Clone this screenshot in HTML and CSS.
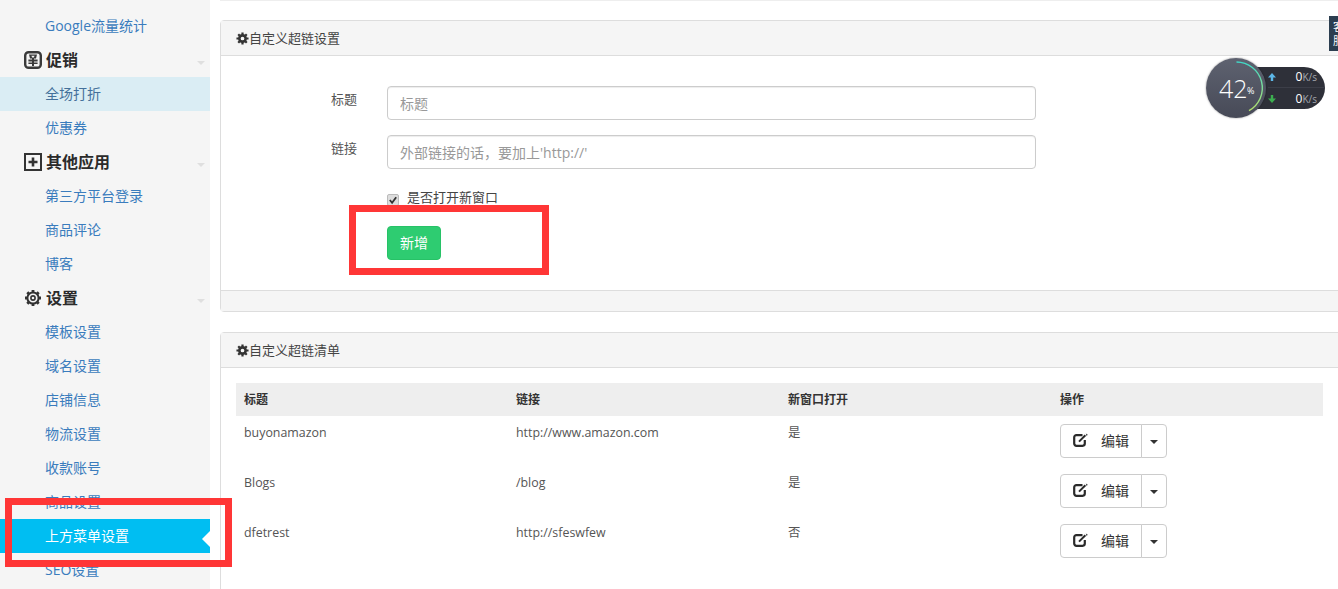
FILE: index.html
```html
<!DOCTYPE html>
<html lang="zh-CN">
<head>
<meta charset="utf-8">
<title>自定义超链设置</title>
<link rel="stylesheet" href="styles.css">
</head>
<body>
<div class="page">
  <aside class="sidebar">
    <a class="item">Google流量统计</a>
    <div class="heading">
      <svg class="head-icon" viewBox="0 0 18 18"><rect x="1.2" y="1.2" width="15.6" height="15.6" rx="3.4" fill="none" stroke="#3a3a3a" stroke-width="2.4"/><path d="M5 3.6H13L12 7.6H6ZM4.4 8.6H13.6V10.4H4.4ZM4.4 11.6H13.6V13H4.4ZM8 7H10V15H8Z" fill="#3a3a3a"/><path d="M7.4 4.8H10.6L9.8 6.6H8.2Z" fill="#f5f5f5"/></svg>
      <span>促销</span><i class="fold"></i>
    </div>
    <a class="item current">全场打折</a>
    <a class="item">优惠券</a>
    <div class="heading">
      <svg class="head-icon" viewBox="0 0 18 18"><rect x="1" y="1" width="16" height="16" fill="none" stroke="#333" stroke-width="2"/><path d="M9 4.5V13.5M4.5 9H13.5" fill="none" stroke="#333" stroke-width="2.6"/></svg>
      <span>其他应用</span><i class="fold"></i>
    </div>
    <a class="item">第三方平台登录</a>
    <a class="item">商品评论</a>
    <a class="item">博客</a>
    <div class="heading">
      <svg class="head-icon" viewBox="0 0 18 18"><circle cx="9" cy="9" r="5.6" fill="none" stroke="#333" stroke-width="2"/><circle cx="9" cy="9" r="2.1" fill="none" stroke="#333" stroke-width="1.6"/><path d="M9 1V3.6M9 14.4V17M1 9H3.6M14.4 9H17M3.3 3.3L5.2 5.2M12.8 12.8L14.7 14.7M3.3 14.7L5.2 12.8M12.8 5.2L14.7 3.3" stroke="#333" stroke-width="2.8"/></svg>
      <span>设置</span><i class="fold"></i>
    </div>
    <a class="item">模板设置</a>
    <a class="item">域名设置</a>
    <a class="item">店铺信息</a>
    <a class="item">物流设置</a>
    <a class="item">收款账号</a>
    <a class="item">商品设置</a>
    <a class="item active">上方菜单设置</a>
    <a class="item">SEO设置</a>
  </aside>

  <main class="main">
    <div class="top-edge"></div>

    <section class="panel">
      <header class="panel-head">
        <svg class="cog" viewBox="0 0 14 14"><path d="M7 2.2A4.8 4.8 0 1 0 7 11.8A4.8 4.8 0 1 0 7 2.2ZM7 5A2 2 0 1 1 7 9A2 2 0 1 1 7 5Z" fill="#333" fill-rule="evenodd"/><path d="M7 .5V3M7 11V13.5M.5 7H3M11 7H13.5M2.4 2.4L4 4M10 10L11.6 11.6M2.4 11.6L4 10M10 4L11.6 2.4" stroke="#333" stroke-width="2.4"/></svg>自定义超链设置
      </header>
      <div class="panel-body form-body">
        <div class="field">
          <label class="field-label">标题</label>
          <input class="field-input" type="text" placeholder="标题">
        </div>
        <div class="field">
          <label class="field-label">链接</label>
          <input class="field-input" type="text" placeholder="外部链接的话，要加上'http://'">
        </div>
        <div class="check-row">
          <span class="check"><svg viewBox="0 0 11 11"><path d="M2 5.5L4.5 8.5L9 2.5" fill="none" stroke="#333" stroke-width="2"/></svg></span>
          <span>是否打开新窗口</span>
        </div>
        <div class="submit-row"><button class="btn-add" type="button">新增</button></div>
      </div>
      <footer class="panel-foot"></footer>
    </section>

    <section class="panel">
      <header class="panel-head">
        <svg class="cog" viewBox="0 0 14 14"><path d="M7 2.2A4.8 4.8 0 1 0 7 11.8A4.8 4.8 0 1 0 7 2.2ZM7 5A2 2 0 1 1 7 9A2 2 0 1 1 7 5Z" fill="#333" fill-rule="evenodd"/><path d="M7 .5V3M7 11V13.5M.5 7H3M11 7H13.5M2.4 2.4L4 4M10 10L11.6 11.6M2.4 11.6L4 10M10 4L11.6 2.4" stroke="#333" stroke-width="2.4"/></svg>自定义超链清单
      </header>
      <div class="panel-body table-body">
        <table class="links">
          <thead>
            <tr><th>标题</th><th>链接</th><th>新窗口打开</th><th>操作</th></tr>
          </thead>
          <tbody>
            <tr>
              <td><span class="cell">buyonamazon</span></td><td><span class="cell">http://www.amazon.com</span></td><td><span class="cell">是</span></td>
              <td><div class="split"><button class="split-main" type="button"><svg class="edit" viewBox="0 0 15 14"><path d="M9.5 2.2H3.4A2.2 2.2 0 0 0 1.2 4.4V10.6A2.2 2.2 0 0 0 3.4 12.8H9.6A2.2 2.2 0 0 0 11.8 10.6V7" fill="none" stroke="#2b2b2b" stroke-width="2.2"/><path d="M6 8.6L12.4 2.2" stroke="#2b2b2b" stroke-width="2"/><path d="M12.8 .6L14.6 1.4L13.8 3.2Z" fill="#2b2b2b"/></svg><span>编辑</span></button><button class="split-caret" type="button"><i></i></button></div></td>
            </tr>
            <tr>
              <td><span class="cell">Blogs</span></td><td><span class="cell">/blog</span></td><td><span class="cell">是</span></td>
              <td><div class="split"><button class="split-main" type="button"><svg class="edit" viewBox="0 0 15 14"><path d="M9.5 2.2H3.4A2.2 2.2 0 0 0 1.2 4.4V10.6A2.2 2.2 0 0 0 3.4 12.8H9.6A2.2 2.2 0 0 0 11.8 10.6V7" fill="none" stroke="#2b2b2b" stroke-width="2.2"/><path d="M6 8.6L12.4 2.2" stroke="#2b2b2b" stroke-width="2"/><path d="M12.8 .6L14.6 1.4L13.8 3.2Z" fill="#2b2b2b"/></svg><span>编辑</span></button><button class="split-caret" type="button"><i></i></button></div></td>
            </tr>
            <tr>
              <td><span class="cell">dfetrest</span></td><td><span class="cell">http://sfeswfew</span></td><td><span class="cell">否</span></td>
              <td><div class="split"><button class="split-main" type="button"><svg class="edit" viewBox="0 0 15 14"><path d="M9.5 2.2H3.4A2.2 2.2 0 0 0 1.2 4.4V10.6A2.2 2.2 0 0 0 3.4 12.8H9.6A2.2 2.2 0 0 0 11.8 10.6V7" fill="none" stroke="#2b2b2b" stroke-width="2.2"/><path d="M6 8.6L12.4 2.2" stroke="#2b2b2b" stroke-width="2"/><path d="M12.8 .6L14.6 1.4L13.8 3.2Z" fill="#2b2b2b"/></svg><span>编辑</span></button><button class="split-caret" type="button"><i></i></button></div></td>
            </tr>
          </tbody>
        </table>
      </div>
    </section>
  </main>
</div>

<div class="service"><span>客</span><span>服</span></div>

<div class="speed">
  <div class="speed-pill">
    <div class="speed-row up"><svg viewBox="0 0 8 8"><path d="M4 0L8 4.4H5.2V8H2.8V4.4H0Z" fill="#5db7e8"/></svg><b>0</b><span>K/s</span></div>
    <div class="speed-row"><svg viewBox="0 0 8 8"><path d="M4 8L8 3.6H5.2V0H2.8V3.6H0Z" fill="#3cae50"/></svg><b>0</b><span>K/s</span></div>
  </div>
  <div class="speed-dial">
    <svg class="speed-arc" viewBox="0 0 60 60">
      <defs><linearGradient id="arc" x1="0" y1="0" x2="0" y2="1"><stop offset="0" stop-color="#3fd8c8"/><stop offset="1" stop-color="#b4e06c"/></linearGradient></defs>
      <path d="M30.5 4A26 26 0 0 1 43 52.7" fill="none" stroke="url(#arc)" stroke-width="1.4"/>
    </svg>
    <span class="speed-num">42</span><span class="speed-pct">%</span>
  </div>
</div>

<div class="mark mark-form"></div>
<div class="mark mark-menu"></div>
</body>
</html>
```

FILE: styles.css
```css
* { box-sizing: border-box; }

html, body {
  margin: 0;
  height: 100%;
  overflow: hidden;
}

body {
  background: #fff;
  color: #555;
  font-family: "Open Sans", "Noto Sans CJK SC", sans-serif;
  font-size: 13px;
  line-height: 20px;
}

.page {
  display: flex;
  height: 589px;
  overflow: hidden;
}

/* sidebar */
.sidebar {
  flex: 0 0 210px;
  background: #f5f5f5;
  padding-top: 9px;
}

.item {
  display: block;
  position: relative;
  height: 34px;
  padding-left: 45px;
  color: #3a7cbd;
  font-size: 14px;
  line-height: 33px;
}

.item.current {
  background: #daedf4;
  color: #44709a;
}

.item.active {
  background: #00bef2;
  color: #fff;
}

.item.active::after {
  content: "";
  position: absolute;
  right: 0;
  top: 12px;
  border-style: solid;
  border-width: 8px 8px 8px 0;
  border-color: transparent #fff transparent transparent;
}

.heading {
  display: flex;
  align-items: center;
  height: 34px;
  padding-left: 24px;
  padding-right: 5px;
  color: #2b2b2b;
  font-size: 16px;
  font-weight: 700;
}

.head-icon {
  flex: none;
  width: 18px;
  height: 18px;
  margin-right: 4px;
}

.fold {
  margin-left: auto;
  margin-top: 6px;
  border-style: solid;
  border-width: 4px 4px 0;
  border-color: #dfdfdf transparent transparent;
}

/* main column */
.main {
  flex: 1;
  min-width: 0;
  padding-left: 10px;
}

.top-edge {
  height: 1px;
  margin-bottom: 19px;
  margin-right: -1px;
  background: #eee;
}

.panel {
  margin-right: -1px;
  margin-bottom: 20px;
  background: #fff;
  border: 1px solid #ddd;
  border-radius: 4px 0 0 4px;
}

.panel-head {
  display: flex;
  align-items: center;
  height: 35px;
  padding-left: 15px;
  background: #f5f5f5;
  border-bottom: 1px solid #ddd;
  color: #444;
  font-size: 13px;
}

.cog {
  flex: none;
  width: 13px;
  height: 13px;
}

.form-body {
  padding: 30px 0;
}

.panel-foot {
  height: 21px;
  background: #f5f5f5;
  border-top: 1px solid #ddd;
}

.field {
  display: flex;
  width: 815px;
  margin-bottom: 15px;
}

.field-label {
  flex: 0 0 166px;
  padding-right: 30px;
  padding-top: 3px;
  text-align: right;
  color: #555;
}

.field-input {
  flex: 1;
  min-width: 0;
  height: 34px;
  padding: 6px 12px;
  border: 1px solid #ccc;
  border-radius: 4px;
  background: #fff;
  color: #555;
  font: inherit;
  font-size: 14px;
  box-shadow: inset 0 1px 1px rgba(0, 0, 0, .075);
}

.field-input::placeholder {
  color: #999;
  opacity: 1;
}

.check-row {
  display: flex;
  align-items: center;
  margin: 18px 0 19px 166px;
  height: 20px;
  color: #444;
}

.check {
  display: block;
  flex: none;
  width: 12px;
  height: 12px;
  margin-top: 6px;
  margin-right: 8px;
  border: 1px solid #bbb;
  border-radius: 2px;
  background: #ddd;
}

.check svg {
  display: block;
  width: 10px;
  height: 10px;
}

.submit-row {
  margin-left: 166px;
}

.btn-add {
  display: block;
  width: 54px;
  height: 34px;
  padding: 0;
  border: 1px solid #27c267;
  border-radius: 4px;
  background: #2ecc71;
  color: #fff;
  font: inherit;
  font-size: 14px;
}

.table-body {
  padding: 15px 15px 40px;
}

.links {
  width: 100%;
  border-collapse: collapse;
  table-layout: fixed;
}

.links th {
  height: 33px;
  padding: 0 8px;
  background: #eee;
  color: #333;
  font-size: 12px;
  font-weight: 700;
  text-align: left;
  width: 272px;
}

.links th:last-child {
  width: auto;
}

.links td {
  height: 50px;
  padding: 8px;
  vertical-align: top;
  color: #555;
  font-size: 12.4px;
}

.cell {
  display: block;
  margin-top: -1px;
}

/* split button */
.split {
  display: flex;
  width: 107px;
}

.split-main,
.split-caret {
  height: 34px;
  padding: 0;
  background: #fff;
  border: 1px solid #ccc;
  color: #333;
  font: inherit;
  font-size: 14px;
}

.split-main {
  display: flex;
  align-items: center;
  width: 82px;
  padding-left: 12px;
  border-radius: 4px 0 0 4px;
}

.split-main span {
  margin-left: 13px;
}

.edit {
  width: 15px;
  height: 14px;
  margin-top: -3px;
}

.split-caret {
  width: 25px;
  margin-left: -1px;
  flex: 1;
  border-radius: 0 4px 4px 0;
}

.split-caret i {
  display: block;
  width: 0;
  margin: 2px auto 0;
  border-style: solid;
  border-width: 4px 4px 0;
  border-color: #333 transparent transparent;
}

/* floating customer-service tab */
.service {
  position: absolute;
  left: 1329px;
  top: 16px;
  display: flex;
  flex-direction: column;
  gap: 1px;
  width: 9px;
  height: 35px;
  padding: 4px 0 0 4px;
  overflow: hidden;
  background: #2c3e50;
  color: #fff;
  font-size: 11px;
  line-height: 13px;
}

.service span {
  display: block;
  flex: none;
  width: 11px;
  height: 13px;
}

/* network speed widget */
.speed {
  position: absolute;
  left: 1205px;
  top: 57px;
  width: 120px;
  height: 62px;
}

.speed-pill {
  position: absolute;
  left: 40px;
  top: 10px;
  width: 80px;
  height: 42px;
  padding-left: 23px;
  border-radius: 0 21px 21px 0;
  background: #2e3039;
}

.speed-row {
  display: flex;
  align-items: center;
  height: 21px;
  padding-right: 8px;
  color: #fff;
  font-size: 10px;
}

.speed-row.up {
  border-bottom: 1px solid #3c3e48;
}

.speed-row svg {
  flex: none;
  width: 8px;
  height: 8px;
}

.speed-row b {
  margin-left: auto;
  font-weight: 400;
  font-size: 12px;
}

.speed-row span {
  color: #a3a6ad;
  font-size: 10px;
}

.speed-dial {
  position: absolute;
  left: 1px;
  top: 1px;
  width: 60px;
  height: 60px;
  border-radius: 50%;
  background: linear-gradient(180deg, #5e6270, #474a57);
  box-shadow: 0 0 2px rgba(0, 0, 0, .45);
  color: #fff;
}

.speed-arc {
  position: absolute;
  inset: 0;
}

.speed-num {
  position: absolute;
  left: 13px;
  top: 15px;
  font-size: 25px;
  font-weight: 300;
  line-height: 30px;
}

.speed-pct {
  position: absolute;
  left: 41px;
  top: 27px;
  font-size: 9px;
  font-weight: 400;
  line-height: 12px;
}

/* red annotations drawn over the screenshot */
.mark {
  position: absolute;
  border: 7px solid #ff3636;
}

.mark-form {
  left: 349px;
  top: 205px;
  width: 200px;
  height: 70px;
}

.mark-menu {
  left: 5px;
  top: 498px;
  width: 227px;
  height: 69px;
}
```
